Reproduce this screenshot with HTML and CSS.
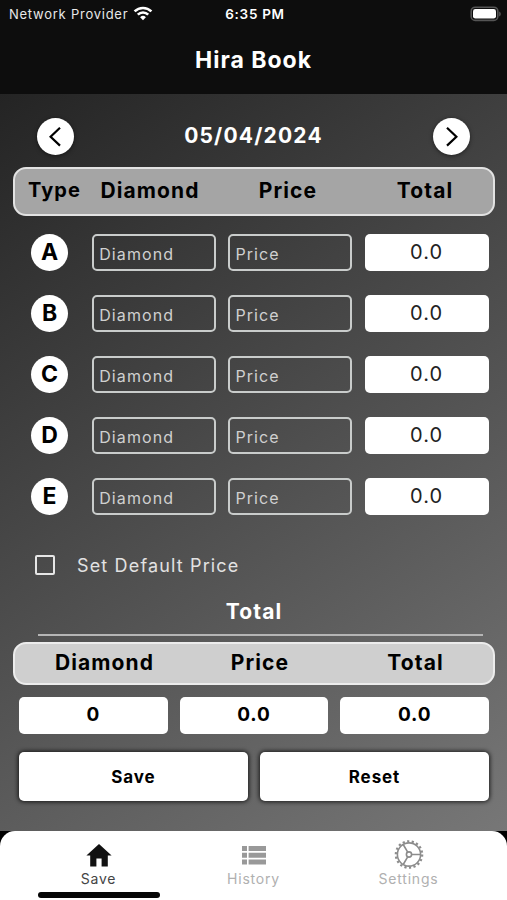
FILE: index.html
```html
<!DOCTYPE html>
<html lang="en">
<head>
    <meta charset="UTF-8">
    <meta name="viewport" content="width=device-width, initial-scale=1.0">
    <title>Hira Book</title>
    <link rel="stylesheet" href="styles.css">
</head>
<body>
    <header>
        <div class="status-bar">
            <div class="network">
                <span>Network Provider</span>
                <svg width="20" height="15" viewBox="0 0 20 15" fill="none" stroke="#fff" stroke-width="2.6">
                    <path d="M1.6 5.4a12 12 0 0 1 16.8 0"/>
                    <path d="M4.8 8.7a7.4 7.4 0 0 1 10.4 0"/>
                    <path d="M10 14.2L7.1 11.2a4.1 4.1 0 0 1 5.8 0z" fill="#fff" stroke="none"/>
                </svg>
            </div>
            <span class="time">6:35 PM</span>
            <svg class="battery" width="31" height="16" viewBox="0 0 31 16">
                <rect x="1.2" y="1.2" width="26.6" height="13.2" rx="4" fill="none" stroke="#555" stroke-width="1.6"/>
                <rect x="3" y="3" width="23" height="9.6" rx="2.4" fill="#fff"/>
                <path d="M29.3 5.4c1.8.8 1.8 4.2 0 5z" fill="#666"/>
            </svg>
        </div>
        <h1>Hira Book</h1>
    </header>
    <main>
        <div class="date-row">
            <button class="arrow">
                <svg width="37" height="37" viewBox="0 0 37 37"><path d="M23 9.8L13.6 18.7L23 27.6"/></svg>
            </button>
            <h2>05/04/2024</h2>
            <button class="arrow">
                <svg width="37" height="37" viewBox="0 0 37 37"><path d="M14 9.8L23.4 18.7L14 27.6"/></svg>
            </button>
        </div>
        <div class="table-head">
            <span class="type">Type</span>
            <span>Diamond</span>
            <span>Price</span>
            <span>Total</span>
        </div>
        <div class="rows">
            <div class="row">
                <div class="letter">A</div>
                <input type="text" placeholder="Diamond">
                <input type="text" placeholder="Price">
                <div class="value">0.0</div>
            </div>
            <div class="row">
                <div class="letter">B</div>
                <input type="text" placeholder="Diamond">
                <input type="text" placeholder="Price">
                <div class="value">0.0</div>
            </div>
            <div class="row">
                <div class="letter">C</div>
                <input type="text" placeholder="Diamond">
                <input type="text" placeholder="Price">
                <div class="value">0.0</div>
            </div>
            <div class="row">
                <div class="letter">D</div>
                <input type="text" placeholder="Diamond">
                <input type="text" placeholder="Price">
                <div class="value">0.0</div>
            </div>
            <div class="row">
                <div class="letter">E</div>
                <input type="text" placeholder="Diamond">
                <input type="text" placeholder="Price">
                <div class="value">0.0</div>
            </div>
        </div>
        <label class="default-price">
            <input type="checkbox">
            <span>Set Default Price</span>
        </label>
        <h3>Total</h3>
        <div class="total-head">
            <span>Diamond</span>
            <span>Price</span>
            <span>Total</span>
        </div>
        <div class="total-values">
            <div>0</div>
            <div>0.0</div>
            <div>0.0</div>
        </div>
        <div class="buttons">
            <button>Save</button>
            <button>Reset</button>
        </div>
    </main>
    <div class="nav-wrap">
        <nav>
            <a class="active">
                <svg width="30" height="30" viewBox="0 0 30 30">
                    <path d="M15 4L2.4 15.4H6.2V26.4H12.4V18.4H17.6V26.4H23.8V15.4H27.6z" fill="#111"/>
                </svg>
                <span>Save</span>
            </a>
            <a>
                <svg width="30" height="30" viewBox="0 0 30 30" fill="#999">
                    <path d="M3 6h5v5H3zM9.6 6H27v5H9.6zM3 12.8h5v5H3zM9.6 12.8H27v5H9.6zM3 19.6h5v5H3zM9.6 19.6H27v5H9.6z"/>
                </svg>
                <span>History</span>
            </a>
            <a>
                <svg width="30" height="30" viewBox="0 0 30 30" fill="none" stroke="#8c8c8c" stroke-width="1.6">
                    <circle cx="15" cy="14.5" r="13.2" stroke-width="2.2" stroke-dasharray="2.2 2.408"/>
                    <circle cx="15" cy="14.5" r="11.6"/>
                    <circle cx="15" cy="14.5" r="2.6"/>
                    <path d="M17.6 14.5H26.6M13.7 12.2L9.2 4.5M13.7 16.8L9.2 24.5"/>
                </svg>
                <span>Settings</span>
            </a>
        </nav>
        <div class="home-line"></div>
    </div>
</body>
</html>
```
FILE: styles.css
```css
* {
    box-sizing: border-box;
}
body {
    font-family: Inter, "Open Sans", sans-serif;
    margin: 0;
    height: 900px;
    background-color: #000;
    color: #fff;
    display: flex;
    flex-direction: column;
    overflow: hidden;
}
header {
    background-color: #0d0d0d;
    height: 94px;
}
.status-bar {
    display: grid;
    grid-template-columns: 1fr auto 1fr;
    align-items: center;
    height: 27px;
    padding: 0 6px 0 9px;
    font-size: 13px;
}
.network {
    display: flex;
    align-items: center;
    gap: 5px;
    letter-spacing: 0.75px;
    color: #e8e8e8;
}
.time {
    font-size: 13.5px;
    font-weight: 600;
    letter-spacing: 0.7px;
}
.battery {
    justify-self: end;
}
h1 {
    margin: 0;
    text-align: center;
    font-size: 23px;
    line-height: 30px;
    padding-top: 18px;
    font-weight: 700;
    letter-spacing: 1px;
}
main {
    height: 737px;
    padding: 23px 12px 0 13px;
    background: linear-gradient(145.5deg, #242424, #777);
}
.date-row {
    display: flex;
    justify-content: space-between;
    align-items: center;
    height: 38px;
    padding: 0 25px 0 24px;
}
.arrow {
    width: 37px;
    height: 37px;
    padding: 0;
    border: none;
    border-radius: 50%;
    background-color: #fff;
    box-shadow: 0 1px 4px rgba(0, 0, 0, 0.5);
}
.arrow svg {
    display: block;
    fill: none;
    stroke: #000;
    stroke-width: 2.2;
}
h2 {
    margin: 0;
    font-size: 21px;
    line-height: 30px;
    font-weight: 700;
    letter-spacing: 1.2px;
}
.table-head {
    display: grid;
    grid-template-columns: 79px 112px 164px 110px;
    align-items: center;
    height: 49px;
    margin-top: 12px;
    padding-bottom: 3px;
    border: 2px solid #e2e2e2;
    border-radius: 13px;
    background-color: #a5a5a5;
    color: #000;
    text-align: center;
    font-size: 21px;
    font-weight: 700;
    letter-spacing: 1.1px;
}
.table-head .type {
    font-size: 20px;
}
.rows {
    display: flex;
    flex-direction: column;
    gap: 24px;
    padding: 18px 6px 0 18px;
}
.row {
    display: grid;
    grid-template-columns: 49px 124px 124px 124px;
    column-gap: 12.2px;
    height: 37px;
}
.letter {
    width: 37px;
    height: 37px;
    border-radius: 50%;
    background-color: #fff;
    color: #000;
    text-align: center;
    font-size: 23px;
    line-height: 37px;
    font-weight: 700;
}
.row input {
    min-width: 0;
    border: 2px solid #c9cccb;
    border-radius: 5px;
    background: transparent;
    padding: 3px 5px 0;
    color: #fff;
    font-family: inherit;
    font-size: 16px;
    letter-spacing: 1.1px;
}
.row input::placeholder {
    color: #d0d0d0;
}
.value {
    border-radius: 5px;
    background-color: #fff;
    color: #222;
    text-align: center;
    font-size: 20px;
    line-height: 36px;
    letter-spacing: 1px;
}
.default-price {
    display: flex;
    align-items: center;
    gap: 22px;
    height: 24px;
    margin: 38px 0 0 22px;
    color: #e2e2e2;
    font-size: 18px;
    letter-spacing: 1.15px;
}
.default-price input {
    appearance: none;
    width: 20px;
    height: 20px;
    margin: 0;
    border: 2px solid #e6e6e6;
    border-radius: 2px;
}
h3 {
    margin: 20px 12px 0 25px;
    height: 39px;
    border-bottom: 2px solid #b5b5b5;
    text-align: center;
    font-size: 21px;
    line-height: 30px;
    padding-right: 13px;
    font-weight: 700;
    letter-spacing: 1.1px;
}
.total-head {
    display: grid;
    grid-template-columns: 179px 132px 179px;
    align-items: center;
    height: 43px;
    margin-top: 6px;
    padding-bottom: 2px;
    border: 2px solid #ececec;
    border-radius: 13px;
    background-color: #cfcfcf;
    color: #000;
    text-align: center;
    font-size: 21px;
    font-weight: 700;
    letter-spacing: 1.1px;
}
.total-values {
    display: grid;
    grid-template-columns: repeat(3, 1fr);
    gap: 12px;
    padding: 12px 6px 0;
}
.total-values div {
    height: 37px;
    border-radius: 5px;
    background-color: #fff;
    color: #000;
    text-align: center;
    font-size: 19px;
    line-height: 36px;
    font-weight: 700;
    letter-spacing: 0.9px;
}
.buttons {
    display: flex;
    gap: 12px;
    padding: 18px 6px 0;
}
.buttons button {
    flex: 1;
    height: 49px;
    border: none;
    border-radius: 5px;
    background-color: #fff;
    color: #000;
    box-shadow: 0 0 4px 1px rgba(0, 0, 0, 0.75);
    font-family: inherit;
    font-size: 17px;
    font-weight: 700;
    letter-spacing: 0.9px;
}
.nav-wrap {
    height: 69px;
    border-radius: 15px 15px 0 0;
    background-color: #fff;
}
nav {
    display: grid;
    grid-template-columns: repeat(3, 155px);
    justify-content: center;
    height: 61px;
    padding-top: 9px;
}
nav a {
    display: flex;
    flex-direction: column;
    align-items: center;
    color: #b0b0b0;
    font-size: 14px;
    line-height: 17px;
    letter-spacing: 0.8px;
}
nav a.active {
    color: #444;
}
.home-line {
    width: 122px;
    height: 6px;
    margin-left: 38px;
    border-radius: 3px;
    background-color: #050505;
}
```
